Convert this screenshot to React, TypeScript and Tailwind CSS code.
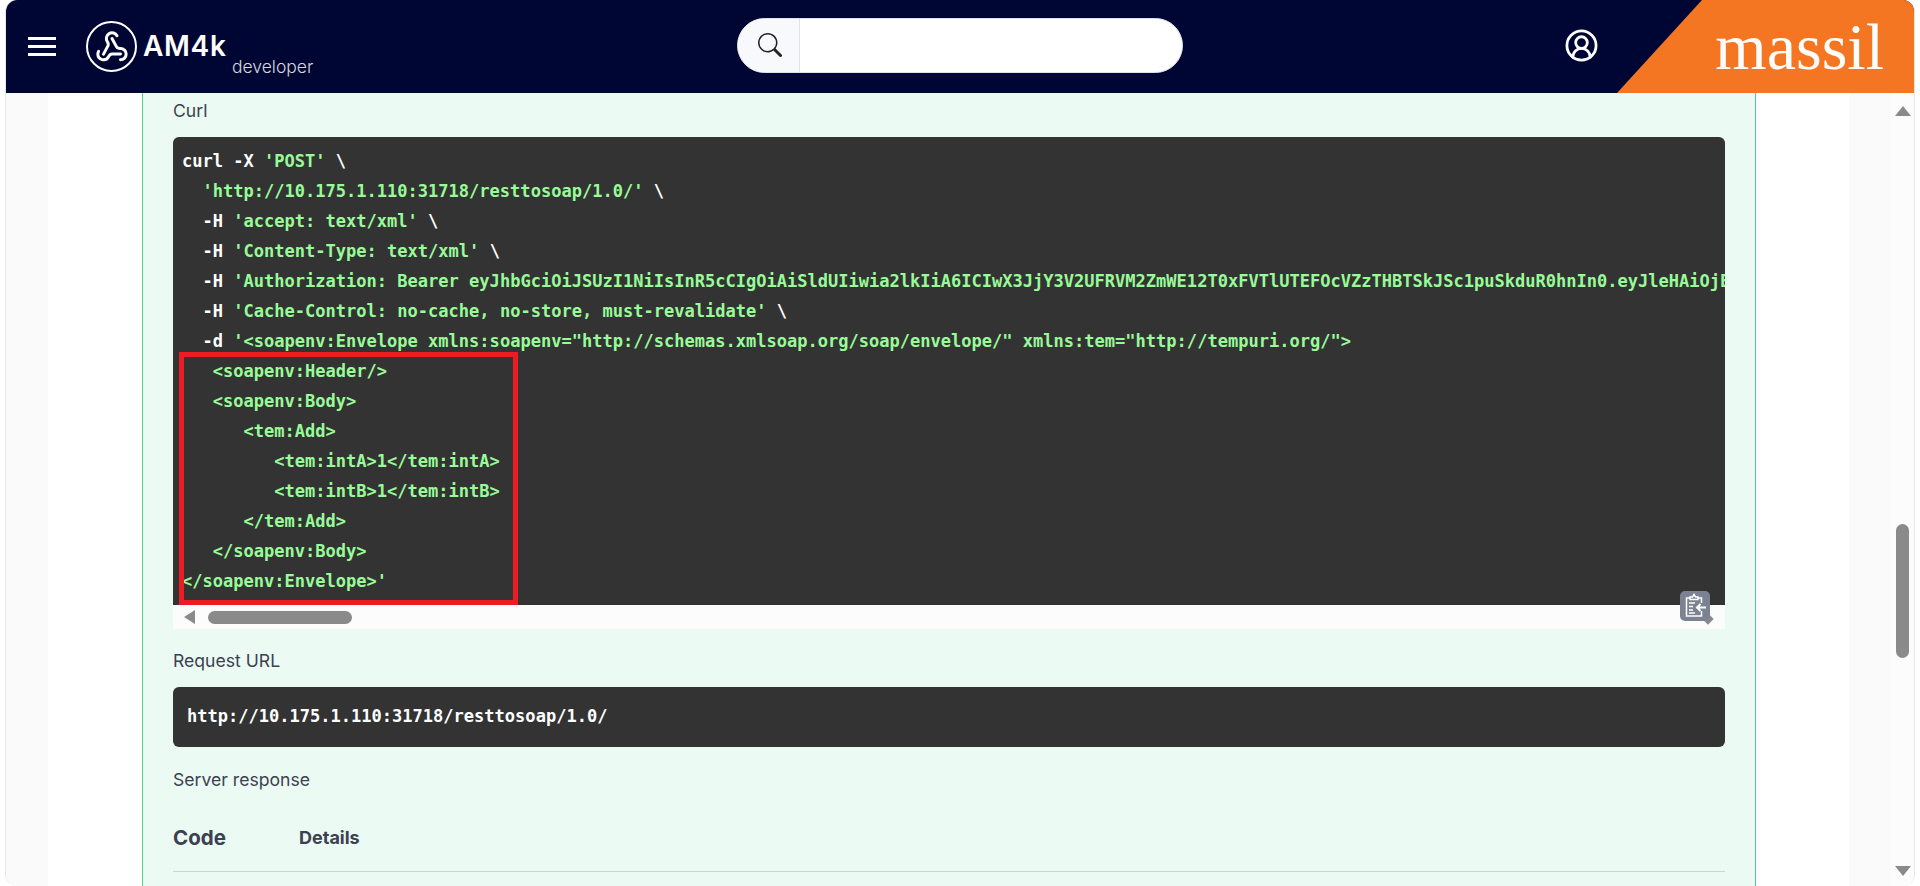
import { Webhook, CircleUserRound } from "lucide-react";
import { BsSearch } from "react-icons/bs";

const sans = "font-['Inter','Liberation_Sans',sans-serif]";

function CurlLine({ flag, text }: { flag?: string; text: string }) {
  return (
    <div className="h-[30px] whitespace-pre leading-[30px]">
      {flag && <span className="text-white">{flag}</span>}
      {text}
    </div>
  );
}

function CopyButton() {
  return (
    <button className="absolute right-[15px] top-[454px] flex h-[30px] w-[30px] items-center justify-center rounded-[5px] bg-[#7d8293]">
      <svg width="24" height="26" viewBox="0 0 24 26" fill="none" stroke="white" strokeWidth="1.5">
        <path d="M7 5H3.500v18h15v-5M18.500 10V5H15" />
        <path d="M7 6.500V4h2.500l1.500-2.500L12.500 4H15v2.500z" />
        <path d="M6 10h6M6 13.500h4M6 17h4M6 20h6" strokeWidth="1.6" />
        <path d="M23 14.500H14M17.500 11l-3.500 3.500 3.500 3.500" strokeWidth="2" />
      </svg>
    </button>
  );
}

function CodeBlock() {
  return (
    <div className="relative mt-[14px] h-[492px]">
      <div className="h-[468px] overflow-hidden rounded-t-[6px] bg-[#333333] pl-[9px] pt-[9px] font-['DejaVu_Sans_Mono',monospace] text-[17.05px] font-bold text-[#98fb98]">
        <div className="h-[30px] whitespace-pre leading-[30px]">
          <span className="text-white">curl -X </span>'POST' <span className="text-white">\</span>
        </div>
        <div className="h-[30px] whitespace-pre leading-[30px]">
          {"  'http://10.175.1.110:31718/resttosoap/1.0/' "}
          <span className="text-white">\</span>
        </div>
        <div className="h-[30px] whitespace-pre leading-[30px]">
          <span className="text-white">{"  -H "}</span>'accept: text/xml' <span className="text-white">\</span>
        </div>
        <div className="h-[30px] whitespace-pre leading-[30px]">
          <span className="text-white">{"  -H "}</span>'Content-Type: text/xml' <span className="text-white">\</span>
        </div>
        <CurlLine
          flag="  -H "
          text="'Authorization: Bearer eyJhbGciOiJSUzI1NiIsInR5cCIgOiAiSldUIiwia2lkIiA6ICIwX3JjY3V2UFRVM2ZmWE12T0xFVTlUTEFOcVZzTHBTSkJSc1puSkduR0hnIn0.eyJleHAiOjE3"
        />
        <div className="h-[30px] whitespace-pre leading-[30px]">
          <span className="text-white">{"  -H "}</span>'Cache-Control: no-cache, no-store, must-revalidate' <span className="text-white">\</span>
        </div>
        <CurlLine
          flag="  -d "
          text={`'<soapenv:Envelope xmlns:soapenv="http://schemas.xmlsoap.org/soap/envelope/" xmlns:tem="http://tempuri.org/">`}
        />
        <CurlLine text="   <soapenv:Header/>" />
        <CurlLine text="   <soapenv:Body>" />
        <CurlLine text="      <tem:Add>" />
        <CurlLine text="         <tem:intA>1</tem:intA>" />
        <CurlLine text="         <tem:intB>1</tem:intB>" />
        <CurlLine text="      </tem:Add>" />
        <CurlLine text="   </soapenv:Body>" />
        <CurlLine text="</soapenv:Envelope>'" />
      </div>

      {/* horizontal scrollbar of the code block */}
      <div className="flex h-[24px] items-center bg-[#fcfcfc] pl-[11px]">
        <div className="h-0 w-0 border-y-[7px] border-r-[11px] border-y-transparent border-r-[#8a8a8a]" />
        <div className="ml-[13px] h-[13px] w-[144px] rounded-full bg-[#8a8a8a]" />
        <div className="ml-auto mr-[13px] mt-[4px] h-[8px] w-[8px] rotate-45 bg-[#8a8a8a]" />
      </div>

      <div className="absolute left-[6px] top-[215px] h-[253px] w-[339px] border-[5px] border-[#ed1c24]" />
      <CopyButton />
    </div>
  );
}

export default function App() {
  return (
    <div className={`h-screen w-full overflow-hidden bg-white pl-[5px] pr-[5px] ${sans}`}>
      <div className="flex h-full flex-col overflow-hidden rounded-t-[12px] rounded-b-[12px] border-x border-[#e6e6e6]">
        <header className="relative flex h-[93px] shrink-0 items-center bg-[#000633]">
          <button className="ml-[22px] flex w-[28px] flex-col gap-[5px]">
            <span className="h-[3px] w-full bg-white" />
            <span className="h-[3px] w-full bg-white" />
            <span className="h-[3px] w-full bg-white" />
          </button>

          <div className="ml-[30px] flex h-[51px] w-[51px] items-center justify-center rounded-full border-2 border-white">
            <Webhook size={34} color="white" strokeWidth={2.1} />
          </div>
          <div className="relative ml-[6px] h-[51px] w-[171px]">
            <div className="text-[28px] font-semibold leading-[51px] tracking-[0.7px] text-white">AM4k</div>
            <div className="absolute left-[89px] top-[33px] text-[17.5px] font-light leading-[26px] text-[#d5d6de]">developer</div>
          </div>

          <div className="mb-[3px] ml-[423px] flex h-[55px] w-[446px] overflow-hidden rounded-full border border-[#dee2e6] bg-white">
            <div className="flex w-[62px] items-center justify-center border-r border-[#dee2e6] bg-[#f8f9fa] pl-[2px]">
              <BsSearch size={24} color="#212529" />
            </div>
          </div>

          <CircleUserRound className="mb-[2px] ml-[381px]" size={35} color="white" strokeWidth={1.9} />

          <div className="absolute right-0 top-0 flex h-full w-[297px] items-start justify-end bg-[#f47623] pr-[30px] [clip-path:polygon(85px_0,100%_0,100%_100%,0_100%)]">
            <span className="font-['Liberation_Serif',serif] text-[66px] leading-[93px] text-[#fffdfb]">massil</span>
          </div>
        </header>

        <div className="flex min-h-0 flex-1">
          <div className="w-[42px] bg-[#fafafa]" />
          <div className="w-[94px] bg-white" />

          <main className="w-[1614px] border-x border-[#4fcf95] bg-[#ebfaf3] px-[30px] text-[17.6px] text-[#3b4151]">
            <div className="pt-[6px] leading-[24px]">Curl</div>
            <CodeBlock />

            <div className="mt-[20px] leading-[24px]">Request URL</div>
            <div className="mt-[14px] flex h-[60px] items-center rounded-[6px] bg-[#333333] pl-[14px] font-['DejaVu_Sans_Mono',monospace] text-[17.05px] font-bold text-white">
              http://10.175.1.110:31718/resttosoap/1.0/
            </div>

            <div className="mt-[21px] leading-[24px]">Server response</div>
            <div className="mt-[31px] flex items-center border-b border-[#c5d8d4] pb-[18px]">
              <span className="w-[126px] text-[20.5px] font-bold leading-[30px]">Code</span>
              <span className="text-[18px] font-bold leading-[30px]">Details</span>
            </div>
          </main>

          <div className="w-[93px] bg-white" />
          <div className="w-[42px] bg-[#fafafa]" />

          {/* page scrollbar */}
          <div className="relative flex w-[23px] flex-col items-center bg-[#fcfcfc]">
            <div className="mt-[13px] h-0 w-0 border-x-[8px] border-b-[10px] border-x-transparent border-b-[#8a8a8a]" />
            <div className="absolute left-[5px] top-[431px] h-[134px] w-[13px] rounded-full bg-[#8a8a8a]" />
            <div className="mt-auto mb-[10px] h-0 w-0 border-x-[8px] border-t-[10px] border-x-transparent border-t-[#8a8a8a]" />
          </div>
        </div>
      </div>
    </div>
  );
}
